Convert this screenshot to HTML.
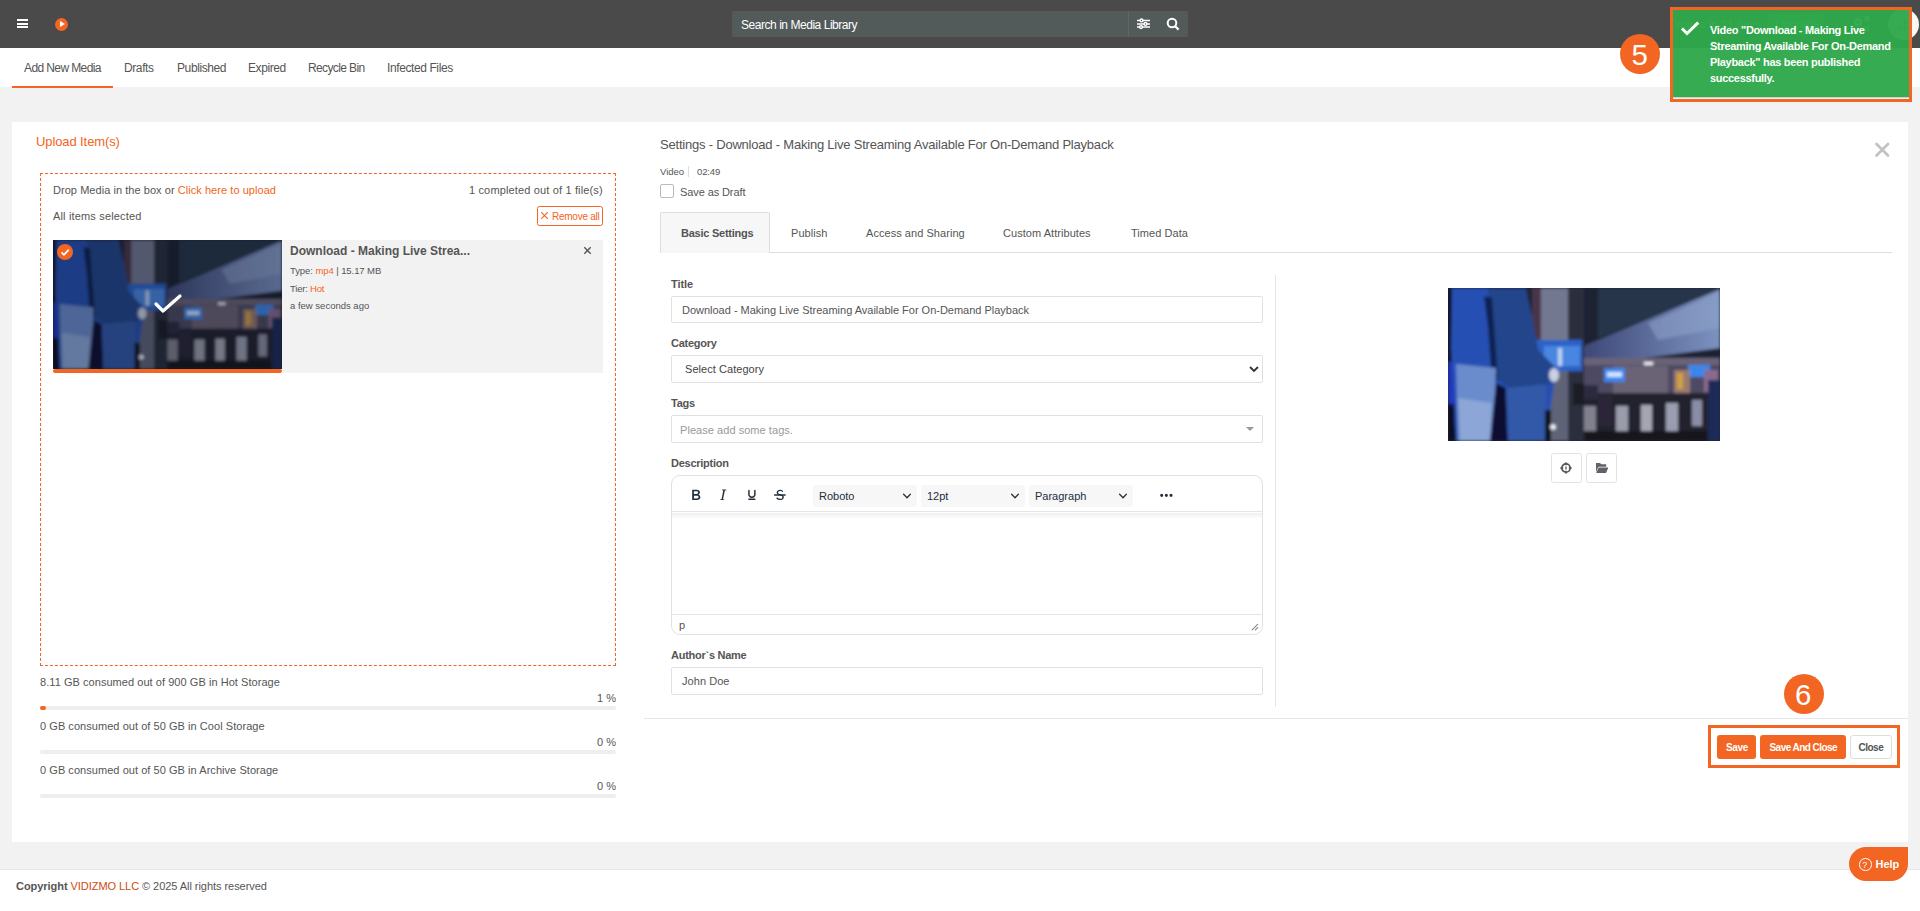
<!DOCTYPE html>
<html><head><meta charset="utf-8">
<style>
*{box-sizing:border-box;margin:0;padding:0}
html,body{width:1920px;height:911px;overflow:hidden;background:#f2f2f2;font-family:"Liberation Sans",sans-serif;color:#555}
.a{position:absolute;white-space:nowrap;line-height:1}
.or{color:#f26522}
#hdr{position:absolute;left:0;top:0;width:1920px;height:48px;background:#4a4a4a}
#nav{position:absolute;left:0;top:48px;width:1920px;height:39px;background:#fff}
.nt{font-size:12px;color:#555;top:61.5px;letter-spacing:-0.4px}
#card{position:absolute;left:12px;top:122px;width:1896px;height:720px;background:#fff}
#foot{position:absolute;left:0;top:869px;width:1920px;height:42px;background:#fff;border-top:1px solid #e6e6e6}
.s11{font-size:11px;letter-spacing:0.05px}
</style></head><body>
<svg width="0" height="0" style="position:absolute">
<defs>
<linearGradient id="jk" x1="0.2" y1="0" x2="0" y2="1"><stop offset="0" stop-color="#2c4e98"/><stop offset="0.5" stop-color="#3a62b0"/><stop offset="1" stop-color="#5a78b8"/></linearGradient>
<linearGradient id="ce" x1="0" y1="0" x2="1" y2="0"><stop offset="0" stop-color="#3e4878"/><stop offset="1" stop-color="#7c92c0"/></linearGradient>
<filter id="bl" x="-5%" y="-5%" width="110%" height="110%"><feGaussianBlur stdDeviation="1.8"/></filter>
<symbol id="photo" viewBox="0 0 272 153" preserveAspectRatio="none">
<rect width="272" height="153" fill="#1e2236"/>
<g filter="url(#bl)">
<rect x="120" y="0" width="152" height="80" fill="#1c2432"/>
<path d="M150 0H272L200 30L150 50Z" fill="#263448"/>
<path d="M136 58L272 1V60L136 78Z" fill="url(#ce)"/>
<path d="M200 35L272 4V40L210 52Z" fill="#90a4cc" opacity="0.55"/>
<rect x="136" y="70" width="136" height="8" fill="#6a6478"/>
<rect x="136" y="77" width="136" height="30" fill="#4e4a62"/>
<rect x="165" y="78" width="55" height="40" fill="#6a6274"/>
<rect x="86" y="0" width="34" height="153" fill="#5e6478"/>
<rect x="93" y="0" width="27" height="52" fill="#727890"/>
<rect x="84" y="0" width="9" height="52" fill="#4a3448"/>
<rect x="120" y="0" width="16" height="153" fill="#2a2e3c"/>
<rect x="125" y="95" width="11" height="22" fill="#1a1e28"/>
<rect x="0" y="0" width="8" height="153" fill="#0c1024"/>
<rect x="0" y="74" width="11" height="42" fill="#2034c0"/>
<rect x="86" y="52" width="48" height="31" fill="#2a62c8"/>
<rect x="96" y="58" width="36" height="20" fill="#4a86e0"/>
<rect x="110" y="60" width="4" height="18" fill="#c0d4f4"/>
<rect x="156" y="80" width="21" height="14" fill="#3a86ea"/>
<rect x="159" y="84" width="15" height="5" fill="#d0e4ff"/>
<rect x="240" y="77" width="22" height="12" fill="#3a86ea"/>
<rect x="226" y="82" width="16" height="24" fill="#9a7a70"/>
<rect x="229" y="85" width="6" height="16" fill="#d0a040"/>
<rect x="256" y="82" width="14" height="22" fill="#8a6a90"/>
<rect x="196" y="74" width="9" height="3" fill="#f0f0f8"/>
<rect x="136" y="105" width="136" height="48" fill="#22202e"/>
<rect x="136" y="97" width="14" height="14" fill="#2c2c40"/>
<rect x="168" y="118" width="12" height="28" fill="#9a9cac"/>
<rect x="193" y="117" width="11" height="29" fill="#a4a6b4"/>
<rect x="218" y="115" width="12" height="30" fill="#9a9eb0"/>
<rect x="244" y="112" width="10" height="26" fill="#8a8ea4"/>
<rect x="136" y="118" width="12" height="26" fill="#80808e"/>
<rect x="150" y="108" width="14" height="30" fill="#2a2838"/>
<rect x="136" y="143" width="136" height="10" fill="#14121c"/>
<rect x="260" y="92" width="12" height="61" fill="#1e2c58"/>
<path d="M4 0H78L86 40L90 62L110 82L106 96L98 153H8L3 60Z" fill="#2650b4"/>
<path d="M40 0H78L86 40L90 62L110 82L100 98L62 100L48 90L42 40Z" fill="#24448c"/>
<path d="M36 8L44 10L50 92L44 96L40 40Z" fill="#0e1a44" opacity="0.85"/>
<path d="M8 76L48 80L46 153H10Z" fill="#6a8ccc"/>
<path d="M10 110L44 115L42 153H12Z" fill="#9ab0dc" opacity="0.7"/>
<path d="M48 95L58 100L60 153H42Z" fill="#0a1030"/>
<path d="M58 100L98 96L98 153H60Z" fill="#3258a8"/>
<rect x="97" y="122" width="6" height="31" fill="#0a0c18"/>
<ellipse cx="106" cy="87" rx="5" ry="7" fill="#c8d0e4"/>
<circle cx="105" cy="139" r="2.8" fill="#f4f4fc"/>
</g>
</symbol>
</defs></svg>
<div id="hdr">
  <div class="a" style="left:17px;top:19px;width:11px;height:2px;background:#fff"></div>
  <div class="a" style="left:17px;top:23px;width:11px;height:2px;background:#fff"></div>
  <div class="a" style="left:17px;top:26px;width:11px;height:2px;background:#fff"></div>
  <div class="a" style="left:55px;top:18px;width:13px;height:13px;border-radius:50%;background:#f26522"></div>
  <div class="a" style="left:60px;top:21px;width:0;height:0;border-left:5px solid #fff;border-top:3.5px solid transparent;border-bottom:3.5px solid transparent"></div>
  <div class="a" style="left:732px;top:11px;width:456px;height:26px;background:#525a5a"></div>
  <div class="a" style="left:1128px;top:11px;width:1px;height:26px;background:#5d6767"></div>
  <div class="a" style="left:741px;top:18.5px;font-size:12px;color:#fff;letter-spacing:-0.46px">Search in Media Library</div>
  <svg class="a" style="left:1136px;top:17px" width="15" height="14" viewBox="0 0 15 14"><g stroke="#fff" stroke-width="1.5" fill="#525a5a"><path d="M1 3.4H14M1 6.9H14M1 10.1H14"/><circle cx="5.5" cy="3.4" r="1.4"/><circle cx="9.5" cy="6.9" r="1.4"/><circle cx="5" cy="10.1" r="1.4"/></g></svg>
  <svg class="a" style="left:1165px;top:16px" width="15" height="15" viewBox="0 0 15 15"><circle cx="7" cy="7" r="4.3" stroke="#fff" stroke-width="2" fill="none"/><path d="M10.2 10.2L13.6 13.6" stroke="#fff" stroke-width="2.2"/></svg>
</div>
<div id="nav"></div>
<div class="a nt" style="left:24px;letter-spacing:-0.6px">Add New Media</div>
<div class="a nt" style="left:124px">Drafts</div>
<div class="a nt" style="left:177px">Published</div>
<div class="a nt" style="left:248px">Expired</div>
<div class="a nt" style="left:308px;letter-spacing:-0.62px">Recycle Bin</div>
<div class="a nt" style="left:387px">Infected Files</div>
<div class="a" style="left:12px;top:86px;width:101px;height:1.5px;background:#f26522"></div>
<div id="card"></div>
<div id="foot"></div>

<!-- LEFT PANEL -->
<div class="a" style="left:36px;top:135px;font-size:13px;color:#f26522;letter-spacing:-0.1px">Upload Item(s)</div>
<div class="a" style="left:40px;top:173px;width:576px;height:493px;border:1px dashed #f26522"></div>
<div class="a s11" style="left:53px;top:185px">Drop Media in the box or <span class="or">Click here to upload</span></div>
<div class="a s11" style="left:469px;top:185px;letter-spacing:0.15px">1 completed out of 1 file(s)</div>
<div class="a s11" style="left:53px;top:211px;letter-spacing:0.16px">All items selected</div>
<div class="a" style="left:537px;top:206px;width:66px;height:20px;border:1px solid #f26522;border-radius:2.5px"></div>
<svg class="a" style="left:540px;top:211px" width="9" height="9" viewBox="0 0 9 9"><path d="M1.2 1.2L7.8 7.8M7.8 1.2L1.2 7.8" stroke="#f26522" stroke-width="1.1"/></svg>
<div class="a" style="left:552px;top:211.5px;font-size:10px;color:#f26522;letter-spacing:-0.25px">Remove all</div>
<div class="a" style="left:282px;top:240px;width:321px;height:133px;background:#f2f2f2"></div>
<svg class="a" style="left:53px;top:240px" width="229" height="129"><use href="#photo"/><rect width="229" height="129" fill="rgba(10,15,30,0.3)"/></svg>
<svg class="a" style="left:153px;top:293px" width="30" height="22" viewBox="0 0 30 22"><path d="M3 11L10 18L27 3" stroke="#fff" stroke-width="3.2" fill="none" stroke-linecap="round" stroke-linejoin="round"/></svg>
<div class="a" style="left:53px;top:369px;width:229px;height:4px;background:#f26522;border-radius:2px"></div>
<div class="a" style="left:57px;top:244px;width:16px;height:16px;border-radius:50%;background:#f26522"></div>
<svg class="a" style="left:57px;top:244px" width="16" height="16" viewBox="0 0 16 16"><path d="M4.5 8.3L7 10.8L11.8 5.6" stroke="#fff" stroke-width="1.8" fill="none"/></svg>
<div class="a" style="left:290px;top:245px;font-size:12px;font-weight:bold;color:#555;letter-spacing:0px">Download - Making Live Strea...</div>
<div class="a" style="left:290px;top:266px;font-size:9.5px;letter-spacing:-0.08px">Type: <span class="or">mp4</span> | 15.17 MB</div>
<div class="a" style="left:290px;top:284px;font-size:9.5px;letter-spacing:-0.2px">Tier: <span class="or">Hot</span></div>
<div class="a" style="left:290px;top:301px;font-size:9.5px;letter-spacing:0px">a few seconds ago</div>
<svg class="a" style="left:583px;top:246px" width="9" height="9" viewBox="0 0 9 9"><path d="M1.3 1.3L7.7 7.7M7.7 1.3L1.3 7.7" stroke="#555" stroke-width="1.4"/></svg>
<!-- storage -->
<div class="a s11" style="left:40px;top:677px">8.11 GB consumed out of 900 GB in Hot Storage</div>
<div class="a s11" style="left:597px;top:693px">1 %</div>
<div class="a" style="left:40px;top:706px;width:576px;height:4px;background:#eee;border-radius:2px"></div>
<div class="a" style="left:40px;top:706px;width:6px;height:4px;background:#f26522;border-radius:2px"></div>
<div class="a s11" style="left:40px;top:721px">0 GB consumed out of 50 GB in Cool Storage</div>
<div class="a s11" style="left:597px;top:737px">0 %</div>
<div class="a" style="left:40px;top:750px;width:576px;height:4px;background:#eee;border-radius:2px"></div>
<div class="a s11" style="left:40px;top:765px">0 GB consumed out of 50 GB in Archive Storage</div>
<div class="a s11" style="left:597px;top:781px">0 %</div>
<div class="a" style="left:40px;top:794px;width:576px;height:4px;background:#eee;border-radius:2px"></div>

<!-- RIGHT PANEL -->
<div class="a" style="left:660px;top:138px;font-size:13px;color:#555;letter-spacing:-0.21px">Settings - Download - Making Live Streaming Available For On-Demand Playback</div>
<div class="x" style="position:absolute;left:1874px;top:141px;width:17px;height:17px">
 <svg width="17" height="17" viewBox="0 0 17 17"><path d="M2.5 3L14 14.5M14 3L2.5 14.5" stroke="#c2c2c2" stroke-width="2.7" stroke-linecap="round"/></svg></div>
<div class="a" style="left:660px;top:167px;font-size:9.5px;color:#555">Video</div>
<div class="a" style="left:688px;top:166px;width:1px;height:11px;background:#ddd"></div>
<div class="a" style="left:697px;top:166.5px;font-size:9.5px;color:#555;letter-spacing:-0.15px">02:49</div>
<div class="a" style="left:660px;top:184px;width:14px;height:14px;border:1px solid #bbb;border-radius:2px"></div>
<div class="a s11" style="left:680px;top:187px;letter-spacing:-0.1px">Save as Draft</div>
<div class="a" style="left:660px;top:252px;width:1232px;height:1px;background:#ddd"></div>
<div class="a" style="left:660px;top:212px;width:110px;height:41px;background:#f7f7f7;border:1px solid #ddd;border-bottom:none;border-radius:2px 2px 0 0"></div>
<div class="a s11" style="left:681px;top:228px;font-weight:bold;letter-spacing:-0.24px">Basic Settings</div>
<div class="a s11" style="left:791px;top:228px">Publish</div>
<div class="a s11" style="left:866px;top:228px">Access and Sharing</div>
<div class="a s11" style="left:1003px;top:228px">Custom Attributes</div>
<div class="a s11" style="left:1131px;top:228px">Timed Data</div>
<!-- form -->
<div class="a s11" style="left:671px;top:279px;font-weight:bold;letter-spacing:-0.1px">Title</div>
<div class="a" style="left:671px;top:296px;width:592px;height:27px;border:1px solid #dfe2e5;border-radius:2px"></div>
<div class="a s11" style="left:682px;top:305px;letter-spacing:-0.01px">Download - Making Live Streaming Available For On-Demand Playback</div>
<div class="a s11" style="left:671px;top:338px;font-weight:bold;letter-spacing:-0.26px">Category</div>
<div class="a" style="left:671px;top:355px;width:592px;height:28px;border:1px solid #dfe2e5;border-radius:2px"></div>
<div class="a s11" style="left:685px;top:364px;color:#444">Select Category</div>
<svg class="a" style="left:1249px;top:365px" width="10" height="8" viewBox="0 0 10 8"><path d="M1 2L5 6L9 2" stroke="#333" stroke-width="1.8" fill="none"/></svg>
<div class="a s11" style="left:671px;top:398px;font-weight:bold;letter-spacing:-0.26px">Tags</div>
<div class="a" style="left:671px;top:415px;width:592px;height:28px;border:1px solid #dfe2e5;border-radius:2px"></div>
<div class="a s11" style="left:680px;top:425px;color:#999">Please add some tags.</div>
<div class="a" style="left:1246px;top:427px;width:0;height:0;border-top:4.5px solid #999;border-left:4px solid transparent;border-right:4px solid transparent"></div>
<div class="a s11" style="left:671px;top:458px;font-weight:bold;letter-spacing:-0.26px">Description</div>
<div class="a" style="left:671px;top:475px;width:592px;height:160px;border:1px solid #dee2e6;border-radius:9px;overflow:hidden">
  <div style="position:absolute;left:0;top:35px;width:590px;height:1px;background:#e3e6e9"></div>
  <div style="position:absolute;left:0;top:37px;width:590px;height:6px;background:linear-gradient(#efefef,#fff)"></div>
  <div style="position:absolute;left:0;top:138px;width:590px;height:1px;background:#e3e6e9"></div>
</div>
<div class="a" style="left:813px;top:485px;width:104px;height:22px;background:#f7f7f7;border-radius:3px"></div>
<div class="a" style="left:921px;top:485px;width:104px;height:22px;background:#f7f7f7;border-radius:3px"></div>
<div class="a" style="left:1029px;top:485px;width:104px;height:22px;background:#f7f7f7;border-radius:3px"></div>
<svg class="a" style="left:686.7px;top:486px" width="17.8" height="17.8" viewBox="0 0 24 24"><path fill="#222f3e" d="M7.8 19c-.3 0-.5 0-.6-.2l-.2-.5V5.7c0-.2 0-.4.2-.5l.6-.2h5c1.5 0 2.7.3 3.5 1 .7.6 1.1 1.4 1.1 2.5a3 3 0 01-.6 1.9c-.4.6-1 1-1.6 1.2.4.1.9.3 1.3.6s.8.7 1 1.2c.4.4.5 1 .5 1.6 0 1.300-.4 2.300-1.300 3-.8.7-2.1 1-3.8 1H7.8zm5-8.3c.6 0 1.2-.1 1.6-.5.4-.3.6-.7.6-1.3 0-1.100-.8-1.700-2.300-1.700H9.3v3.5h3.4zm.5 6c.7 0 1.3-.1 1.7-.4.4-.4.6-.9.6-1.5s-.2-1-.7-1.4c-.4-.3-1-.4-2-.4H9.4v3.8h4z"/></svg>
<svg class="a" style="left:714.4px;top:486px" width="17.8" height="17.8" viewBox="0 0 24 24"><path fill="#222f3e" d="M16.7 4.7l-.1.9h-.3c-.6 0-1 0-1.4.3-.3.3-.4.6-.5 1.1l-2.1 9.8v.6c0 .5.4.8 1.4.8h.2l-.2.8H8l.2-.8h.2c1.1 0 1.8-.5 2-1.5l2-9.8.1-.5c0-.6-.4-.8-1.400-.8h-.3l.2-.9h5.8z"/></svg>
<svg class="a" style="left:742.7px;top:486px" width="17.8" height="17.8" viewBox="0 0 24 24"><path fill="#222f3e" d="M16 5c.6 0 1 .4 1 1v5.5a4 4 0 01-.4 1.8l-1 1.4a5.3 5.3 0 01-5.5 1 5 5 0 01-1.6-1c-.5-.4-.8-.9-1.1-1.4a4 4 0 01-.4-1.8V6c0-.6.4-1 1-1s1 .4 1 1v5.5c0 .3 0 .6.2 1l.6.7a3.3 3.3 0 002.2.8 3.4 3.4 0 002.2-.8c.3-.2.4-.5.6-.8l.2-.9V6c0-.6.4-1 1-1zM8 17h8c.6 0 1 .4 1 1s-.4 1-1 1H8a1 1 0 010-2z"/></svg>
<svg class="a" style="left:770.6px;top:486px" width="17.8" height="17.8" viewBox="0 0 24 24"><g fill="#222f3e"><path d="M15.6 8.5c-.5-.7-1-1.1-1.3-1.3-.6-.4-1.3-.6-2-.6-2.7 0-2.8 1.7-2.8 2.1 0 1.6 1.8 2 3.2 2.3 4.4.9 4.6 2.8 4.6 3.9 0 1.4-.7 4.1-5 4.1A6.2 6.2 0 017 16.4l1.5-1.1c.4.6 1.6 2 3.7 2 1.6 0 2.5-.4 3-1.2.4-.8.3-2-.8-2.6-.7-.4-1.6-.7-2.9-1-1-.2-3.900-.8-3.900-3.600C7.6 6 10.3 5 12.4 5c2.9 0 4 2 4 2l-.8 1.5z"/><path d="M5 11h14a1 1 0 010 2H5a1 1 0 010-2z"/></g></svg>
<svg class="a" style="left:903px;top:491.6px" width="8" height="8" viewBox="0 0 10 10"><path d="M8.7 2.2c.3-.3.8-.3 1 0 .4.4.4.9 0 1.2L5.7 7.8c-.3.3-.9.3-1.2 0L.2 3.4a.8.8 0 010-1.2c.3-.3.8-.3 1.1 0L5 6l3.7-3.8z" fill="#222f3e"/></svg>
<svg class="a" style="left:1011px;top:491.6px" width="8" height="8" viewBox="0 0 10 10"><path d="M8.7 2.2c.3-.3.8-.3 1 0 .4.4.4.9 0 1.2L5.7 7.8c-.3.3-.9.3-1.2 0L.2 3.4a.8.8 0 010-1.2c.3-.3.8-.3 1.1 0L5 6l3.7-3.8z" fill="#222f3e"/></svg>
<svg class="a" style="left:1119px;top:491.6px" width="8" height="8" viewBox="0 0 10 10"><path d="M8.7 2.2c.3-.3.8-.3 1 0 .4.4.4.9 0 1.2L5.7 7.8c-.3.3-.9.3-1.2 0L.2 3.4a.8.8 0 010-1.2c.3-.3.8-.3 1.1 0L5 6l3.7-3.8z" fill="#222f3e"/></svg>
<div class="a" style="left:819px;top:491px;font-size:11px;color:#222f3e">Roboto</div>
<div class="a" style="left:927px;top:491px;font-size:11px;color:#222f3e">12pt</div>
<div class="a" style="left:1035px;top:491px;font-size:11px;color:#222f3e">Paragraph</div>
<svg class="a" style="left:1157.2px;top:486.1px" width="18.7" height="18.7" viewBox="0 0 24 24"><path fill="#222f3e" d="M6 10a2 2 0 00-2 2c0 1.1.9 2 2 2a2 2 0 002-2 2 2 0 00-2-2zm12 0a2 2 0 00-2 2c0 1.1.9 2 2 2a2 2 0 002-2 2 2 0 00-2-2zm-6 0a2 2 0 00-2 2c0 1.1.9 2 2 2a2 2 0 002-2 2 2 0 00-2-2z"/></svg>
<svg class="a" style="left:1251px;top:623px" width="8" height="8" viewBox="0 0 10 10"><path fill="#8a8a8a" d="M8.1 1.1A.5.5 0 119 2l-7 7A.5.5 0 111 8l7-7zM8.1 5.1A.5.5 0 119 6l-3 3A.5.5 0 115 8l3-3z"/></svg>
<div class="a" style="left:679px;top:620px;font-size:11px;color:#555">p</div>
<div class="a s11" style="left:671px;top:650px;font-weight:bold;letter-spacing:-0.26px">Author`s Name</div>
<div class="a" style="left:671px;top:667px;width:592px;height:28px;border:1px solid #dfe2e5;border-radius:2px"></div>
<div class="a s11" style="left:682px;top:676px">John Doe</div>
<div class="a" style="left:1275px;top:275px;width:1px;height:432px;background:#e4e7ea"></div>
<div class="a" style="left:644px;top:718px;width:1264px;height:1px;background:#e4e7ea"></div>
<svg class="a" style="left:1448px;top:288px" width="272" height="153"><use href="#photo"/></svg>
<div class="a" style="left:1550.5px;top:453.3px;width:31px;height:29.5px;border:1px solid #e2e2e6;border-radius:2.5px"></div>
<div class="a" style="left:1586.3px;top:453.3px;width:31px;height:29.5px;border:1px solid #e2e2e6;border-radius:2.5px"></div>
<svg class="a" style="left:1560.4px;top:461.75px" width="12" height="12" viewBox="0 0 12 12"><g stroke="#555" fill="none"><circle cx="6" cy="6" r="4.2" stroke-width="1.7"/><path d="M6 0.3V3.2M6 8.8V11.7M0.3 6H3.2M8.8 6H11.7M6 4.6V7.4" stroke-width="1.3"/></g></svg>
<svg class="a" style="left:1595.9px;top:462.9px" width="12.5" height="10" viewBox="0 0 12.5 10"><g fill="#5f6368"><path d="M0 0H4L5.3 1.3H10.2V3.8H2.4L0 9Z"/><path d="M2.6 4.5H12.4L10 10H0.2Z"/></g></svg>
<!-- buttons -->
<div class="a" style="left:1717px;top:735px;width:39px;height:24px;background:#f26522;border-radius:3px"></div>
<div class="a" style="left:1760px;top:735px;width:86px;height:24px;background:#f26522;border-radius:3px"></div>
<div class="a" style="left:1850px;top:735px;width:42px;height:24px;background:#fff;border:1px solid #ddd;border-radius:3px"></div>
<div class="a" style="left:1726px;top:742.5px;font-size:10px;font-weight:bold;color:#fff;letter-spacing:-0.35px">Save</div>
<div class="a" style="left:1769.5px;top:742.5px;font-size:10px;font-weight:bold;color:#fff;letter-spacing:-0.55px">Save And Close</div>
<div class="a" style="left:1858.5px;top:742.5px;font-size:10px;font-weight:bold;color:#555;letter-spacing:-0.5px">Close</div>
<div class="a" style="left:1708px;top:725px;width:192px;height:43px;border:3px solid #f26522"></div>
<div class="a" style="left:1784px;top:674px;width:40px;height:40px;border-radius:50%;background:#f26522"></div>
<div class="a" style="left:1795px;top:680px;font-size:29.5px;color:#fff">6</div>
<!-- help -->
<div class="a" style="left:1849px;top:847px;width:59px;height:34px;background:#f26522;border-radius:17px 0 17px 17px"></div>
<div class="a" style="left:1875.5px;top:858.5px;font-size:11px;font-weight:bold;color:#fff">Help</div>
<div class="a" style="left:1859px;top:858px;width:12.5px;height:12.5px;border:1px solid #fff;border-radius:50%"></div>
<div class="a" style="left:1862.3px;top:860.5px;font-size:9px;color:#fff">?</div>
<!-- toast -->
<div class="a" style="left:1673px;top:0;width:247px;height:48px;overflow:hidden"><div class="a" style="left:-6px;top:18.5px;font-size:11.5px;color:#fff">Expires in 21 days</div></div>
<div class="a" style="left:1768px;top:13px;width:56px;height:22px;background:#43b05c;border-radius:3px"></div>
<div class="a" style="left:1775.5px;top:18.5px;font-size:11.5px;color:#fff">Upgrade</div>
<svg class="a" style="left:1850px;top:14px" width="22" height="20" viewBox="0 0 22 20"><g fill="#fff"><circle cx="8" cy="8.3" r="4.2"/><circle cx="17" cy="4.7" r="2.6"/><circle cx="17" cy="14.5" r="2.6"/></g><g fill="#4a4a4a"><circle cx="8" cy="8.3" r="1.6"/><circle cx="17" cy="4.7" r="1"/><circle cx="17" cy="14.5" r="1"/></g></svg>
<div class="a" style="left:1888px;top:9px;width:31px;height:31px;border-radius:50%;background:#f8f8f8"></div>
<div class="a" style="left:1897px;top:19px;font-size:12px;color:#888">JD</div>
<div class="a" style="left:1673px;top:10px;width:236px;height:88px;background:rgba(46,168,74,0.96);border-bottom:1px solid rgba(215,215,215,0.9)"></div>
<svg class="a" style="left:1680px;top:21px" width="20" height="15" viewBox="0 0 20 15"><path d="M2 7.5L7 12.5L18.2 1.6" stroke="#fff" stroke-width="3" fill="none"/></svg>
<div class="a" style="left:1710px;top:21.5px;width:200px;font-size:11px;font-weight:bold;color:#fff;white-space:normal;line-height:16px;letter-spacing:-0.3px">Video "Download - Making Live Streaming Available For On-Demand Playback" has been published successfully.</div>
<div class="a" style="left:1670px;top:7px;width:242px;height:95px;border:3px solid #f26522"></div>
<div class="a" style="left:1620px;top:34px;width:40px;height:40px;border-radius:50%;background:#f26522"></div>
<div class="a" style="left:1631.5px;top:40px;font-size:29.5px;color:#fff">5</div>
<div class="a s11" style="left:16px;top:881px;letter-spacing:-0.05px"><b style="color:#555">Copyright</b> <span style="color:#cc4b0c">VIDIZMO LLC</span> © 2025 All rights reserved</div>
</body></html>
